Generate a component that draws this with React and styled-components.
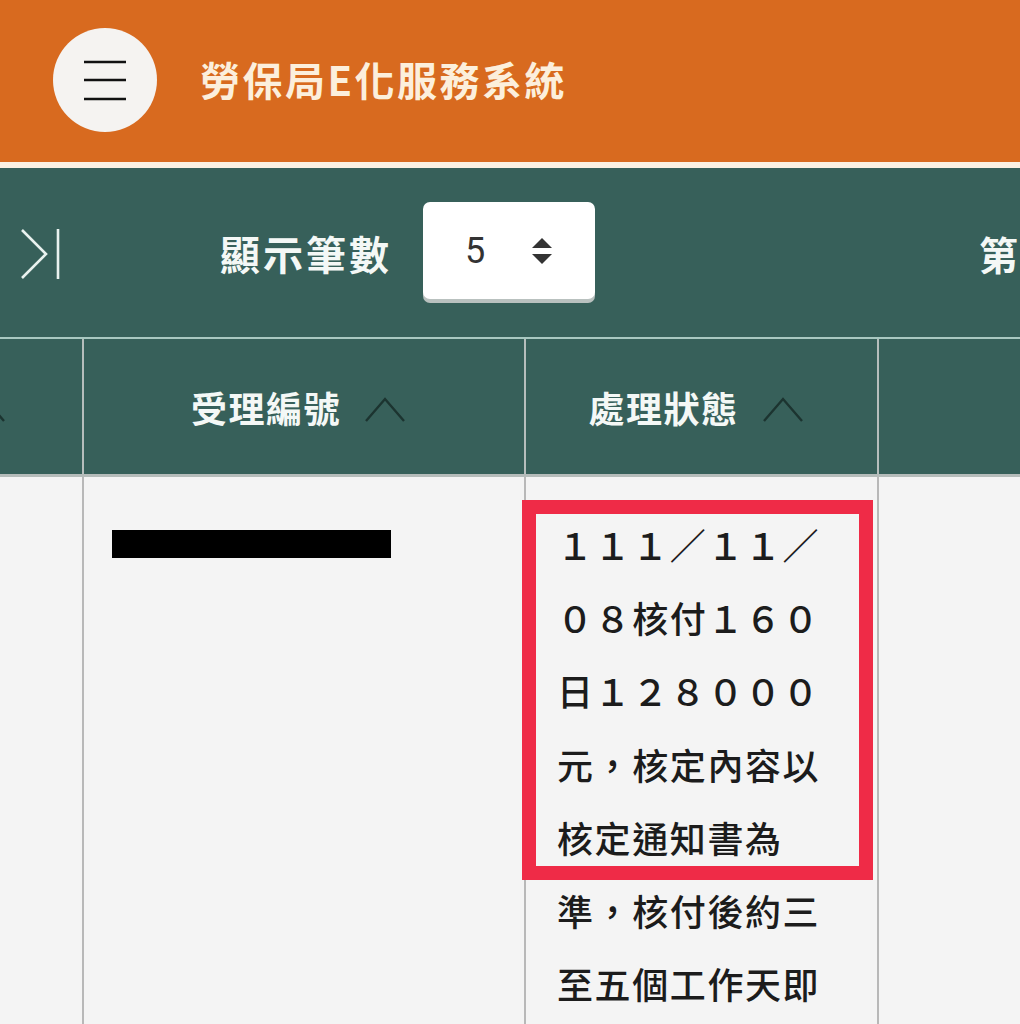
import styled, { createGlobalStyle } from 'styled-components';

const GlobalStyle = createGlobalStyle`
  html, body {
    margin: 0;
    padding: 0;
    background: #f4f4f4;
    overflow: hidden;
  }
  body {
    font-family: "Noto Sans CJK TC", "Noto Sans", sans-serif;
  }
`;

const statusLines = [
  '１１１／１１／',
  '０８核付１６０',
  '日１２８０００',
  '元，核定內容以',
  '核定通知書為',
  '準，核付後約三',
  '至五個工作天即',
];

function MenuIcon() {
  return (
    <svg width="44" height="42" viewBox="0 0 44 42">
      <g stroke="#111" strokeWidth="2.6">
        <line x1="1" y1="3" x2="43" y2="3" />
        <line x1="1" y1="21" x2="43" y2="21" />
        <line x1="1" y1="40" x2="43" y2="40" />
      </g>
    </svg>
  );
}

function LastPageIcon() {
  return (
    <svg width="42" height="54" viewBox="0 0 42 54">
      <g stroke="#e9f2ef" strokeWidth="2.6" fill="none">
        <polyline points="2,3 26,27 2,51" />
        <line x1="38" y1="2" x2="38" y2="52" />
      </g>
    </svg>
  );
}

function SortIcon() {
  return (
    <svg width="40" height="26" viewBox="0 0 40 26">
      <polyline points="1,25 20,3 39,25" fill="none" stroke="#1c3430" strokeWidth="2.4" />
    </svg>
  );
}

function UpDownIcon() {
  return (
    <svg width="22" height="28" viewBox="0 0 22 28">
      <polygon points="11,1 21,11 1,11" fill="#333" />
      <polygon points="1,17 21,17 11,27" fill="#333" />
    </svg>
  );
}

export default function App() {
  return (
    <Page>
      <GlobalStyle />
      <TopBar>
        <MenuButton>
          <MenuIcon />
        </MenuButton>
        <Title>勞保局E化服務系統</Title>
      </TopBar>

      <Toolbar>
        <IconButton>
          <LastPageIcon />
        </IconButton>
        <ToolLabel>顯示筆數</ToolLabel>
        <PageSize>
          <span>5</span>
          <UpDownIcon />
        </PageSize>
        <PageInfo>第</PageInfo>
      </Toolbar>

      <Table>
        <HeadRow>
          <HeadCell $width={84} $clip>
            <SortIcon />
          </HeadCell>
          <HeadCell $width={442}>
            <span>受理編號</span>
            <SortIcon />
          </HeadCell>
          <HeadCell $width={353}>
            <span>處理狀態</span>
            <SortIcon />
          </HeadCell>
          <HeadCell $width={160} />
        </HeadRow>
        <BodyRow>
          <BodyCell $width={84} />
          <BodyCell $width={442}>
            <Redacted />
          </BodyCell>
          <BodyCell $width={353}>
            <StatusText>
              {statusLines.map((line) => (
                <div key={line}>{line}</div>
              ))}
            </StatusText>
            <Highlight />
          </BodyCell>
          <BodyCell $width={160} />
        </BodyRow>
      </Table>
    </Page>
  );
}

const Page = styled.div`
  width: 1020px;
  height: 1024px;
  overflow: hidden;
  background: #f4f4f4;
`;

const TopBar = styled.header`
  height: 162px;
  background: #d86a1f;
  border-bottom: 6px solid #fbf1e2;
  display: flex;
  align-items: center;
  padding-left: 53px;
  gap: 43px;
  box-sizing: content-box;
`;

const MenuButton = styled.div`
  width: 104px;
  height: 104px;
  border-radius: 50%;
  background: #f5f3f1;
  display: flex;
  align-items: center;
  justify-content: center;
  margin-top: -2px;
`;

const Title = styled.h1`
  margin: 0;
  font-size: 40px;
  font-weight: 700;
  letter-spacing: 2.5px;
  color: #fcefdc;
  margin-top: -4px;
`;

const Toolbar = styled.div`
  height: 169px;
  background: #37605a;
  border-bottom: 2px solid #a9c8c1;
  display: flex;
  align-items: center;
  padding-left: 20px;
  white-space: nowrap;
  overflow: hidden;

  & > * {
    flex-shrink: 0;
  }
`;

const IconButton = styled.div`
  display: flex;
  align-items: center;
  margin-top: 3px;
`;

const ToolLabel = styled.span`
  margin-left: 158px;
  font-size: 40px;
  font-weight: 700;
  color: #f4f8f6;
  letter-spacing: 3px;
`;

const PageSize = styled.div`
  margin-left: 31px;
  width: 172px;
  height: 97px;
  margin-top: -4px;
  background: #fff;
  border-radius: 7px;
  box-shadow: 0 4px 0 #b9c1bf;
  display: flex;
  align-items: center;
  gap: 46px;
  padding-left: 42px;
  box-sizing: border-box;
  font-family: Roboto, "Liberation Sans", sans-serif;
  font-size: 36px;
  color: #333;
`;

const PageInfo = styled.span`
  margin-left: 384px;
  font-size: 39px;
  font-weight: 700;
  color: #f4f8f6;
`;

const Table = styled.div`
  display: flex;
  flex-direction: column;
  width: 1040px;
`;

const HeadRow = styled.div`
  display: flex;
  height: 135px;
  background: #37605a;
  border-bottom: 3px solid #b5bcba;
`;

const HeadCell = styled.div`
  flex: 0 0 ${(p) => p.$width}px;
  border-right: 2px solid #b6bebc;
  display: flex;
  align-items: center;
  justify-content: ${(p) => (p.$clip ? 'flex-start' : 'center')};
  gap: 24px;
  padding-right: ${(p) => (p.$clip ? 0 : 12)}px;
  box-sizing: border-box;
  overflow: hidden;
  font-size: 36px;
  font-weight: 700;
  letter-spacing: 1.5px;
  color: #f4f8f6;

  & > svg {
    flex-shrink: 0;
    margin-top: 4px;
    margin-left: ${(p) => (p.$clip ? -35 : 0)}px;
  }
`;

const BodyRow = styled.div`
  display: flex;
  height: 560px;
`;

const BodyCell = styled.div`
  position: relative;
  flex: 0 0 ${(p) => p.$width}px;
  border-right: 2px solid #b8b8b8;
  box-sizing: border-box;
  background: #f4f4f4;
`;

const Redacted = styled.div`
  margin: 53px 0 0 28px;
  width: 279px;
  height: 28px;
  background: #000;
`;

const StatusText = styled.div`
  padding: 31px 0 0 31px;
  font-size: 36px;
  font-weight: 500;
  line-height: 73.2px;
  letter-spacing: 1.6px;
  color: #1c1c1c;
  white-space: nowrap;
`;

const Highlight = styled.div`
  position: absolute;
  left: -4px;
  top: 23px;
  width: 351px;
  height: 380px;
  border: 14px solid #ef2b47;
  box-sizing: border-box;
  pointer-events: none;
`;
